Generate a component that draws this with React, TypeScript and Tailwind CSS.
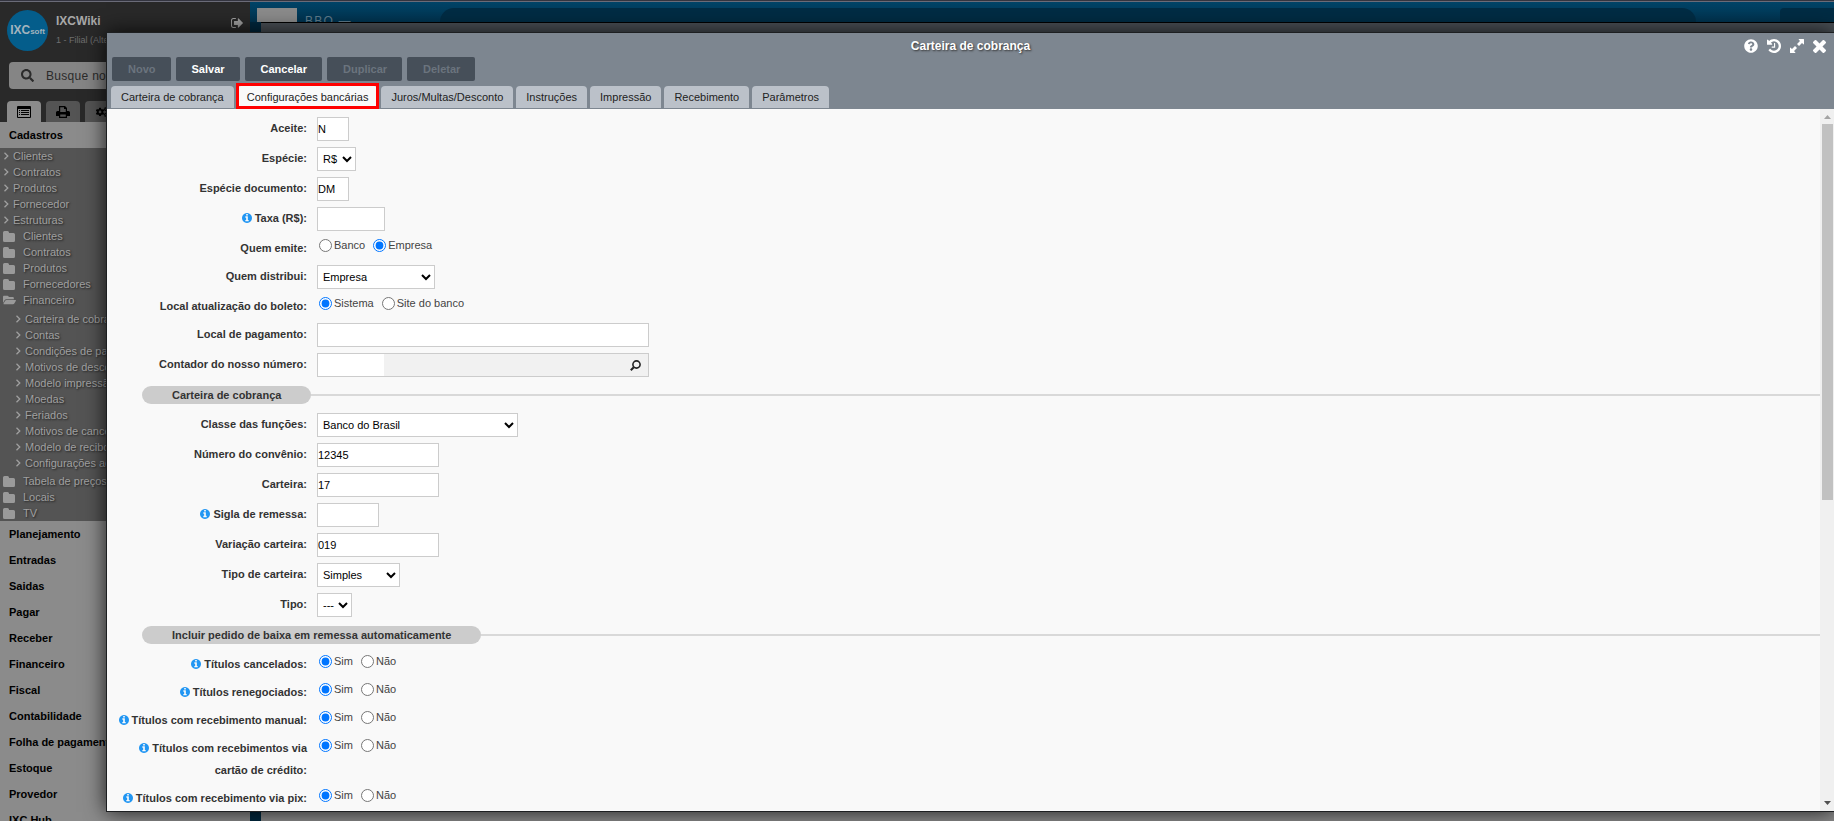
import React, { useId } from "react";
import { FaSearch, FaQuestionCircle, FaFolderOpen, FaCogs } from "react-icons/fa";

const simpleItems = ["Clientes", "Contratos", "Produtos", "Fornecedor", "Estruturas"];
const folders = ["Clientes", "Contratos", "Produtos", "Fornecedores"];
const financeItems = ["Carteira de cobrança", "Contas", "Condições de pagamento", "Motivos de desconto", "Modelo impressão", "Moedas", "Feriados", "Motivos de cancelamento", "Modelo de recibo", "Configurações adicionais"];
const lastFolders = ["Tabela de preços", "Locais", "TV"];
const sections = ["Planejamento", "Entradas", "Saidas", "Pagar", "Receber", "Financeiro", "Fiscal", "Contabilidade", "Folha de pagamento", "Estoque", "Provedor", "IXC Hub"];

const glyphs = {
  info: { box: "0 128 1536 1536", d: "M1024 1376v-160q0-14-9-23t-23-9h-96v-512q0-14-9-23t-23-9h-320q-14 0-23 9t-9 23v160q0 14 9 23t23 9h96v320h-96q-14 0-23 9t-9 23v160q0 14 9 23t23 9h448q14 0 23-9t9-23zm-128-896v-160q0-14-9-23t-23-9h-192q-14 0-23 9t-9 23v160q0 14 9 23t23 9h192q14 0 23-9t9-23zm640 416q0 209-103 385.500t-279.500 279.500-385.500 103-385.500-103-279.500-279.500-103-385.500 103-385.500 279.500-279.500 385.500-103 385.500 103 279.500 279.500 103 385.500z" },
  close: { box: "302 366 1188 1188", d: "M1490 1322q0 40-28 68l-136 136q-28 28-68 28t-68-28l-294-294-294 294q-28 28-68 28t-68-28l-136-136q-28-28-28-68t28-68l294-294-294-294q-28-28-28-68t28-68l136-136q28-28 68-28t68 28l294 294 294-294q28-28 68-28t68 28l136 136q28 28 28 68t-28 68l-294 294 294 294q28 28 28 68z" },
  history: { box: "128 128 1536 1536", d: "M1664 896q0 156-61 298t-164 245-245 164-298 61q-172 0-327-72.500t-264-204.500q-7-10-6.500-22.500t8.500-20.500l137-138q10-9 25-9 16 2 23 12 73 95 179 147t225 52q104 0 198.500-40.500t163.500-109.500 109.500-163.500 40.500-198.500-40.500-198.500-109.500-163.500-163.500-109.500-198.500-40.500q-98 0-188 35.500t-160 101.500l137 138q31 30 14 69-17 40-59 40h-448q-26 0-45-19t-19-45v-448q0-42 40-59 39-17 69 14l130 129q107-101 244.500-156.500t284.500-55.500q156 0 298 61t245 164 164 245 61 298zm-640-288v448q0 14-9 23t-23 9h-320q-14 0-23-9t-9-23v-64q0-14 9-23t23-9h224v-352q0-14 9-23t23-9h64q14 0 23 9t9 23z" },
  exit: { box: "0 128 1568 1536", d: "M640 1440q0 4 1 20t.5 26.500-3 23.500-10 19.500-20.500 6.500h-320q-119 0-203.500-84.500t-84.500-203.500v-704q0-119 84.500-203.500t203.500-84.500h320q13 0 22.500 9.500t9.500 22.500q0 4 1 20t.5 26.500-3 23.500-10 19.500-20.500 6.500h-320q-66 0-113 47t-47 113v704q0 66 47 113t113 47h312l11.500 1 11.500 3 8 5.500 7 9 2 13.500zm928-544q0 26-19 45l-544 544q-19 19-45 19t-45-19-19-45v-288h-448q-26 0-45-19t-19-45v-384q0-26 19-45t45-19h448v-288q0-26 19-45t45-19 45 19l544 544q19 19 19 45z" },
  expand: { box: "0 0 14 14", d: "M9 0h4.500q.5 0 .5.5V5q0 .8-.6.3L12 4 9 7 7 5l3-3L8.700.6Q8.200 0 9 0zM5 14H.5Q0 14 0 13.500V9q0-.8.6-.3L2 10l3-3 2 2-3 3 1.300 1.400Q5.800 14 5 14z" },
  folder: { box: "0 0 12 11", d: "M1.500 0h3Q6 0 6 1.500V2h4.500Q12 2 12 3.500v6Q12 11 10.500 11h-9Q0 11 0 9.500v-8Q0 0 1.500 0z" },
  list: { box: "0 0 14 12", d: "M1 0h12q1 0 1 1v10q0 1-1 1H1q-1 0-1-1V1q0-1 1-1zm0 3v8h12V3zM2 4h1v1H2zm2 0h8v1H4zM2 6h1v1H2zm2 0h8v1H4zM2 8h1v1H2zm2 0h8v1H4z" },
  print: { box: "0 0 14 12", d: "M3 0h6l2 2v3h1.500Q14 5 14 6.500V10h-3v2H3v-2H0V6.500Q0 5 1.500 5H3zm1.200 1.200V6h5.600V3H8V1.200zM4.200 8.500v2.300h5.600V8.500z" },
};

function Glyph({ name, className }: { name: keyof typeof glyphs; className: string }) {
  const g = glyphs[name];
  return (
    <svg viewBox={g.box} className={className} fill="currentColor" fillRule="evenodd" aria-hidden="true">
      <path d={g.d} />
    </svg>
  );
}

function Leaf({ text, nested }: { text: string; nested?: boolean }) {
  return (
    <li>
      <a href="#" className={"flex h-4 items-center gap-1 whitespace-nowrap " + (nested ? "pl-[15px]" : "pl-[3px]")}>
        <svg viewBox="0 0 6 8" className="h-2 w-[6px]" fill="none" stroke="currentColor" strokeWidth="1.3" aria-hidden="true">
          <path d="M1.500.7 4.800 4 1.500 7.300" />
        </svg>
        {text}
      </a>
    </li>
  );
}

function Folder({ text, open }: { text: string; open?: boolean }) {
  return (
    <li>
      <a href="#" className="flex h-4 items-center gap-2 whitespace-nowrap pl-[3px]">
        <span className="w-3 text-[#9a9a9a]">
          {open ? <FaFolderOpen className="h-3 w-[13px]" /> : <Glyph name="folder" className="h-[11px] w-3" />}
        </span>
        {text}
      </a>
    </li>
  );
}

function Sidebar() {
  return (
    <aside className="flex w-[250px] shrink-0 flex-col bg-[#8b8b8b] text-[11px] text-[#a0a0a0]">
      <div className="flex shrink-0 flex-col bg-[#292929]">
        <div className="flex h-[60px] items-center gap-2 pb-1 pl-[7px]">
          <div className="flex size-[41px] items-center justify-center rounded-full bg-[#045d8b] text-[#a3b4be]">
            <span className="text-[12px] font-bold">IXC</span>
            <span className="pt-1 text-[8px] font-bold">soft</span>
          </div>
          <div className="flex flex-1 flex-col gap-[6px]">
            <strong className="text-[12px] leading-[14px] text-[#a8a8a8]">IXCWiki</strong>
            <span className="text-[9px] leading-3 text-[#6f6f6f]">1 - Filial (Alterar)</span>
          </div>
          <button aria-label="Sair" className="mr-[7px] mb-[14px]"><Glyph name="exit" className="size-3" /></button>
        </div>
        <label className="mx-[9px] flex h-[27px] items-center gap-3 rounded bg-[#858585] pl-3 text-[#2b2b2b]">
          <FaSearch className="size-[13px]" />
          <input type="text" aria-label="Busca" placeholder="Busque no menu" className="w-40 bg-transparent text-[12px] tracking-wide placeholder:text-[#2b2b2b]" />
        </label>
        <div className="flex h-[33px] items-end gap-[5px] pl-[7px] text-black">
          <button aria-label="Menu" className="flex h-[21px] w-[34px] items-center justify-center rounded-t bg-[#8b8b8b]"><Glyph name="list" className="h-3 w-[14px]" /></button>
          <button aria-label="Relatórios" className="flex h-[21px] w-[34px] items-center justify-center rounded-t bg-[#545454]"><Glyph name="print" className="h-3 w-[14px]" /></button>
          <button aria-label="Configurações" className="flex h-[21px] w-[34px] items-center justify-center rounded-t bg-[#545454]"><FaCogs className="size-3" /></button>
        </div>
      </div>
      <h2 className="flex h-[26px] shrink-0 items-center pl-[9px] font-bold text-black">Cadastros</h2>
      <ul className="shrink-0 bg-[#545454] [text-shadow:1px_1px_2px_#222]">
        {simpleItems.map((t) => <Leaf key={t} text={t} />)}
        {folders.map((t) => <Folder key={t} text={t} />)}
        <Folder text="Financeiro" open />
        <li className="pt-[3px] pb-[2px]">
          <ul>{financeItems.map((t) => <Leaf key={t} text={t} nested />)}</ul>
        </li>
        {lastFolders.map((t) => <Folder key={t} text={t} />)}
      </ul>
      {sections.map((t) => (
        <h2 key={t} className="flex h-[26px] shrink-0 items-center whitespace-nowrap pl-[9px] font-bold text-black">{t}</h2>
      ))}
    </aside>
  );
}

function Row({ label, info, children, htmlFor }: { label: string; info?: boolean; children: React.ReactNode; htmlFor?: string }) {
  return (
    <div className="flex items-start gap-[10px]">
      <label htmlFor={htmlFor} className="w-[200px] shrink-0 text-right text-[11px] leading-[22px] font-bold text-[#333]">
        {info && <Glyph name="info" className="mr-[3px] inline size-[10px] align-[-1px] text-[#2196f3]" />}
        {label}
      </label>
      {children}
    </div>
  );
}

function TextRow({ label, value, width, info }: { label: string; value?: string; width: string; info?: boolean }) {
  const id = useId();
  return (
    <Row label={label} info={info} htmlFor={id}>
      <input id={id} type="text" defaultValue={value} className={"h-6 border border-[#ccc] bg-white text-[11px] text-black " + width} />
    </Row>
  );
}

function SelectRow({ label, value, width }: { label: string; value: string; width: string }) {
  const id = useId();
  return (
    <Row label={label} htmlFor={id}>
      <select id={id} className={"h-6 border border-[#ccc] bg-white pl-[1px] text-[11px] text-black " + width}>
        <option>{value}</option>
      </select>
    </Row>
  );
}

function RadioRow({ label, options, selected = 0, info }: { label: string; options: string[]; selected?: number; info?: boolean }) {
  const name = useId();
  return (
    <div role="radiogroup" aria-label={label}>
      <Row label={label} info={info}>
        <div className="flex gap-2 pl-[2px] text-[11px] text-[#444]">
          {options.map((o, i) => (
            <label key={o} className="flex h-4 items-center gap-[2px]">
              <input type="radio" name={name} defaultChecked={i === selected} className="size-[13px]" />
              {o}
            </label>
          ))}
        </div>
      </Row>
    </div>
  );
}

function Divider({ text }: { text: string }) {
  return (
    <div className="flex items-center py-[3px] pl-[35px]">
      <h3 className="h-[18px] rounded-full bg-[#ccc] px-[30px] text-[11px] leading-[18px] font-bold text-[#333]">{text}</h3>
      <div className="h-[2px] flex-1 bg-[#d9d9d9]" />
    </div>
  );
}

const yesNo = ["Sim", "Não"];
const tabs = ["Carteira de cobrança", "Configurações bancárias", "Juros/Multas/Desconto", "Instruções", "Impressão", "Recebimento", "Parâmetros"];
const actions = [
  { text: "Novo", off: true },
  { text: "Salvar", off: false },
  { text: "Cancelar", off: false },
  { text: "Duplicar", off: true },
  { text: "Deletar", off: true },
];

function Dialog() {
  return (
    <section role="dialog" aria-label="Carteira de cobrança" className="absolute top-8 right-0 bottom-[9px] left-[106px] flex flex-col border border-r-0 border-[#1d1f21] bg-[#f9f9f9] shadow-[0_0_20px_rgba(0,0,0,0.8)]">
      <header className="flex flex-col bg-[#7d8690]">
        <div className="relative flex h-6 items-center justify-center pt-[2px]">
          <h1 className="text-[12px] font-bold text-white [text-shadow:1px_1px_2px_#333]">Carteira de cobrança</h1>
          <div className="absolute top-[6px] right-2 flex gap-[9px] text-white">
            <button aria-label="Ajuda"><FaQuestionCircle className="size-[14px]" /></button>
            <button aria-label="Histórico"><Glyph name="history" className="size-[14px]" /></button>
            <button aria-label="Expandir"><Glyph name="expand" className="size-[14px]" /></button>
            <button aria-label="Fechar"><Glyph name="close" className="size-[13px]" /></button>
          </div>
        </div>
        <div className="flex gap-[5px] pl-[5px]">
          {actions.map((a) => (
            <button key={a.text} disabled={a.off} className={"h-6 rounded-[2px] bg-[#464f59] pr-[15px] pl-4 text-[11px] font-bold " + (a.off ? "text-[#6b747e]" : "text-white")}>{a.text}</button>
          ))}
        </div>
        <div role="tablist" className="flex gap-[3px] pt-[5px] pb-px pl-1">
          {tabs.map((t, i) => (
            <button key={t} role="tab" aria-selected={i === 1} className={"relative h-[22px] rounded-t px-[10px] text-[11px] text-[#222] " + (i === 1 ? "bg-[#f9f9f9]" : "bg-[#bbc1c9]")}>
              {t}
              {i === 1 && <span className="absolute -inset-x-px -top-[3px] -bottom-px border-[3px] border-[#f00]" />}
            </button>
          ))}
        </div>
      </header>
      <div className="flex min-h-0 flex-1">
        <form className="flex min-w-0 flex-1 flex-col gap-[6px] overflow-hidden pt-2">
          <TextRow label="Aceite:" value="N" width="w-8" />
          <SelectRow label="Espécie:" value="R$" width="w-[39px]" />
          <TextRow label="Espécie documento:" value="DM" width="w-8" />
          <TextRow label="Taxa (R$):" width="w-[68px]" info />
          <RadioRow label="Quem emite:" options={["Banco", "Empresa"]} selected={1} />
          <SelectRow label="Quem distribui:" value="Empresa" width="w-[118px]" />
          <RadioRow label="Local atualização do boleto:" options={["Sistema", "Site do banco"]} />
          <TextRow label="Local de pagamento:" width="w-[332px]" />
          <Row label="Contador do nosso número:" htmlFor="contador">
            <div className="flex h-6 w-[332px] border border-[#ccc] bg-[#f1f1f1]">
              <input id="contador" type="text" className="w-[66px] bg-white text-[11px]" />
              <button type="button" aria-label="Pesquisar" className="ml-auto mr-[7px]">
                <svg viewBox="0 0 11 11" className="size-[11px]" fill="none" stroke="#222" aria-hidden="true">
                  <circle cx="6.500" cy="4.500" r="3.600" strokeWidth="1.600" />
                  <path d="M3.800 7.200.8 10.200" strokeWidth="2" />
                </svg>
              </button>
            </div>
          </Row>
          <Divider text="Carteira de cobrança" />
          <SelectRow label="Classe das funções:" value="Banco do Brasil" width="w-[201px]" />
          <TextRow label="Número do convênio:" value="12345" width="w-[122px]" />
          <TextRow label="Carteira:" value="17" width="w-[122px]" />
          <TextRow label="Sigla de remessa:" width="w-[62px]" info />
          <TextRow label="Variação carteira:" value="019" width="w-[122px]" />
          <SelectRow label="Tipo de carteira:" value="Simples" width="w-[83px]" />
          <SelectRow label="Tipo:" value="---" width="w-[35px]" />
          <Divider text="Incluir pedido de baixa em remessa automaticamente" />
          <RadioRow label="Títulos cancelados:" options={yesNo} info />
          <RadioRow label="Títulos renegociados:" options={yesNo} info />
          <RadioRow label="Títulos com recebimento manual:" options={yesNo} info />
          <RadioRow label="Títulos com recebimentos via cartão de crédito:" options={yesNo} info />
          <RadioRow label="Títulos com recebimento via pix:" options={yesNo} info />
        </form>
        <div className="flex w-[14px] flex-col items-center bg-[#f0f0f0]" aria-hidden="true">
          <svg viewBox="0 0 14 15" className="h-[15px] w-[14px]"><path d="M4 10h7L7.500 6z" fill="#a3a3a3" /></svg>
          <div className="ml-px h-[376px] w-[11px] bg-[#c1c1c1]" />
          <svg viewBox="0 0 14 15" className="mt-auto h-[15px] w-[14px]"><path d="M4 5h7L7.500 9z" fill="#505050" /></svg>
        </div>
      </div>
    </section>
  );
}

export default function App() {
  return (
    <div className="relative flex h-screen flex-col overflow-hidden bg-[#8b8b8b] font-['Liberation_Sans',Arial,sans-serif]">
      <div className="h-[2px] shrink-0 border-b border-[#6a6b78] bg-[#33343f]" />
      <div className="flex min-h-0 flex-1">
        <Sidebar />
        <main className="flex flex-1 flex-col bg-[#00283f]">
          <div className="flex h-5 bg-linear-to-b from-[#004468] to-[#00334f] pl-[7px]">
            <div className="mt-[6px] w-10 bg-[#8b8b8b]" />
            <span className="h-5 overflow-hidden pt-3 pl-2 text-[12px] leading-[14px] tracking-widest text-[#5f7b8b]">BBO —</span>
            <div className="mt-[6px] mr-[84px] ml-[88px] flex-1 rounded-t-[20px] bg-[#002c44]" />
            <div className="mt-[6px] w-[54px] rounded-tl bg-[#002c44]" />
          </div>
          <div className="ml-[11px] flex-1 border-t border-black bg-[#8b8b8b]">
            <div className="h-3 bg-[#4a5056]" />
          </div>
        </main>
      </div>
      <Dialog />
    </div>
  );
}
